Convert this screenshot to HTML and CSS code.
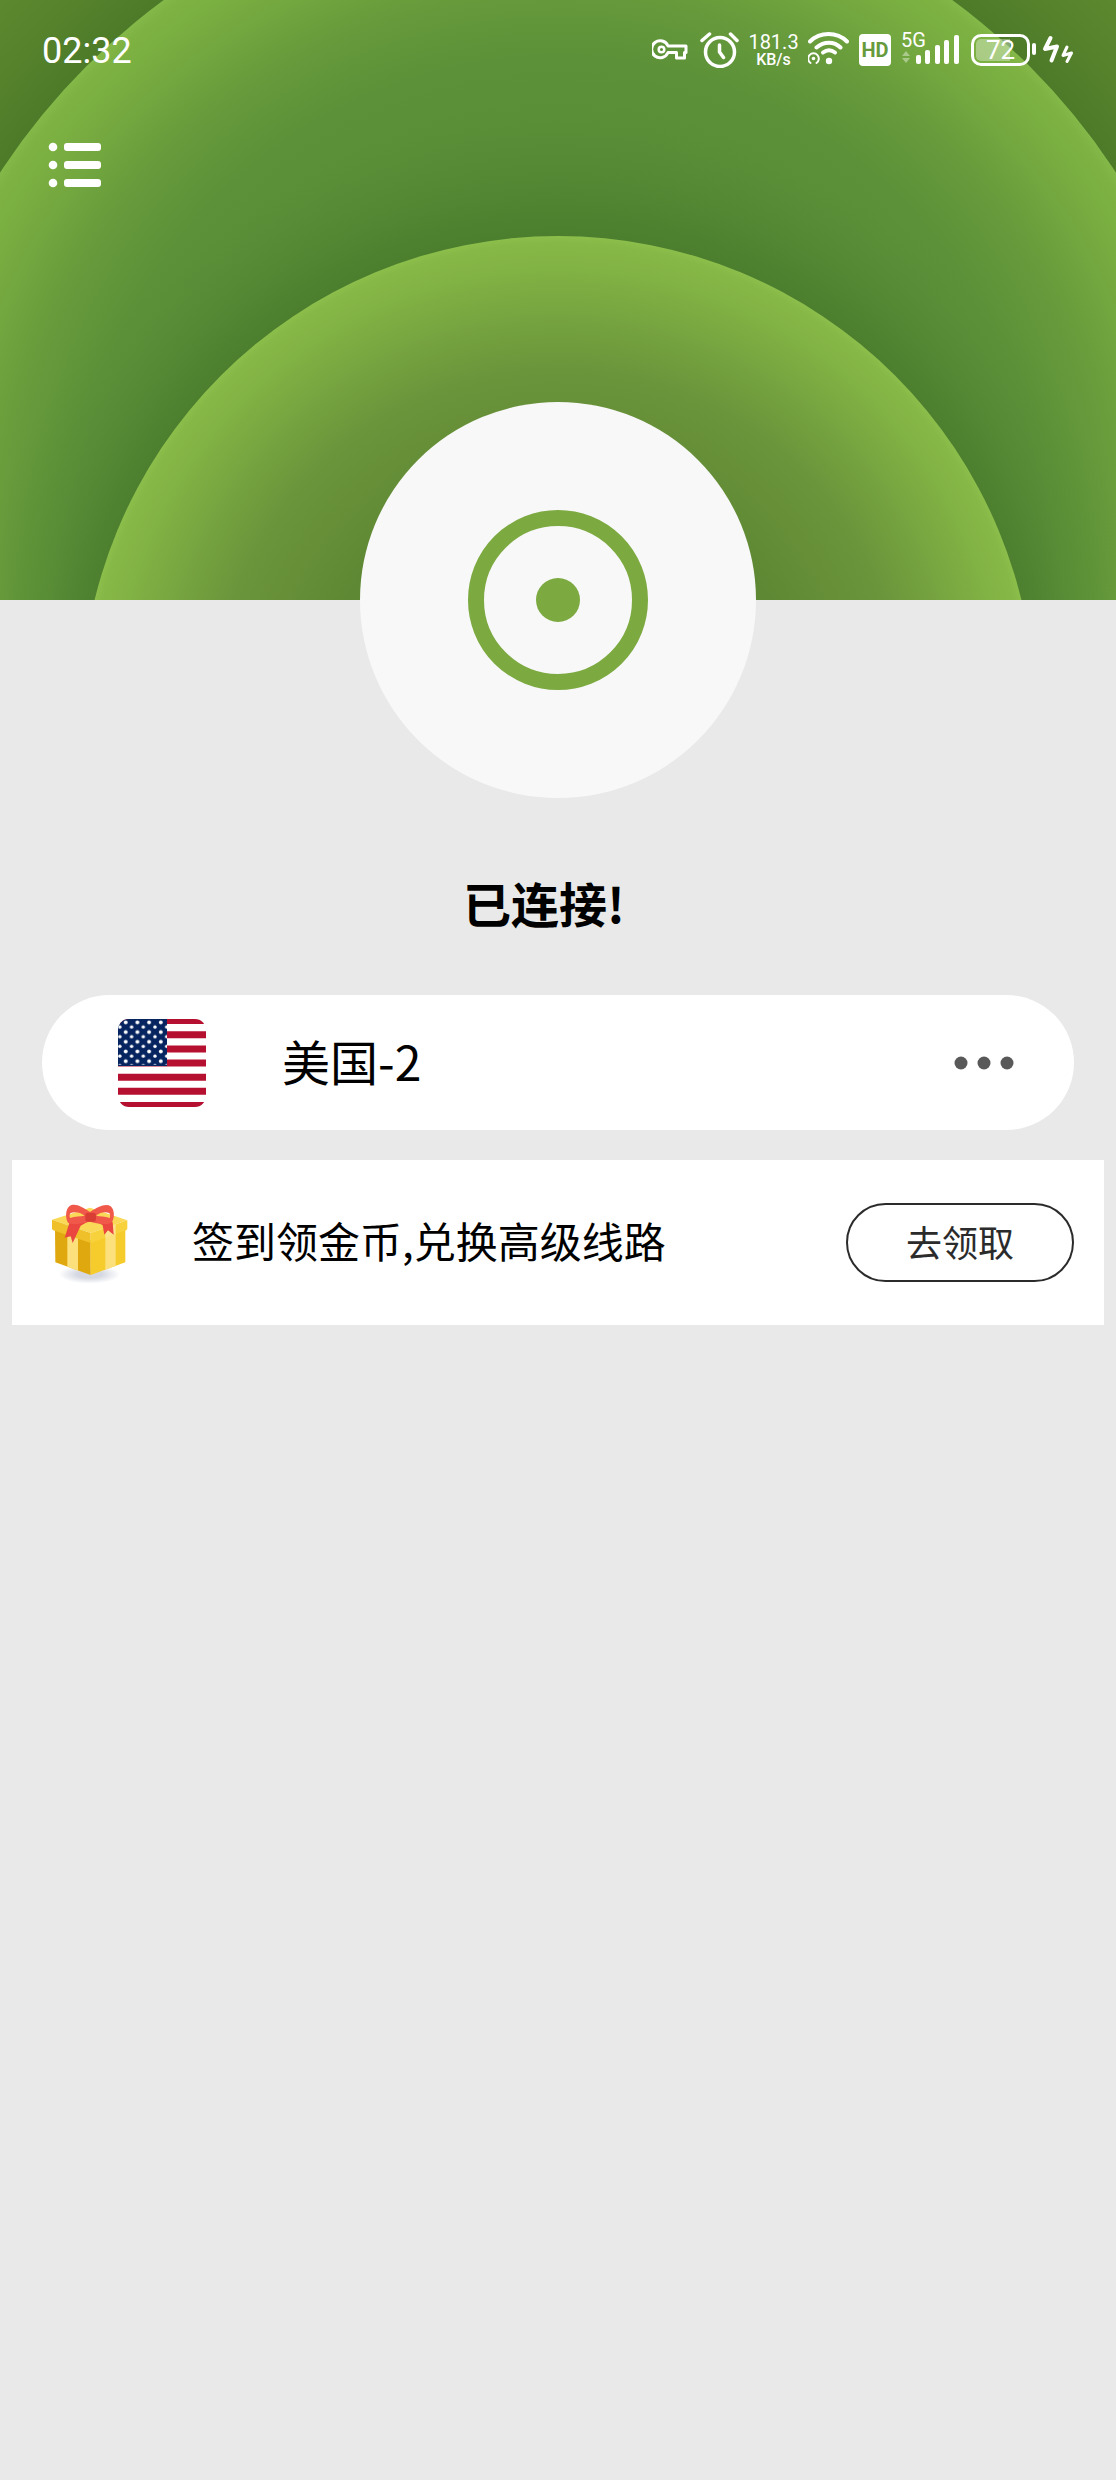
FILE: index.html
```html
<!DOCTYPE html>
<html lang="zh-CN">
<head>
<meta charset="utf-8">
<meta name="viewport" content="width=device-width, initial-scale=1">
<title>已连接</title>
<link rel="stylesheet" href="styles.css">
</head>
<body>
<header class="hero">
  <svg class="hero-art" viewBox="0 0 1116 600" preserveAspectRatio="xMidYMax slice" aria-hidden="true">
    <defs>
      <radialGradient id="back" gradientUnits="userSpaceOnUse" cx="558" cy="538" r="800">
        <stop offset="0.83" stop-color="#4c7a28"/>
        <stop offset="0.9" stop-color="#56822c"/>
        <stop offset="1" stop-color="#5f8b31"/>
      </radialGradient>
      <radialGradient id="outer" gradientUnits="userSpaceOnUse" cx="558" cy="538" r="667">
        <stop offset="0.5" stop-color="#568a34"/>
        <stop offset="0.72" stop-color="#5d9139"/>
        <stop offset="0.82" stop-color="#669a3b"/>
        <stop offset="0.92" stop-color="#76aa40"/>
        <stop offset="0.985" stop-color="#7eb343"/>
        <stop offset="1" stop-color="#84b94a"/>
      </radialGradient>
      <radialGradient id="shade" gradientUnits="userSpaceOnUse" cx="558" cy="713" r="600">
        <stop offset="0.79" stop-color="#47792b" stop-opacity="0.75"/>
        <stop offset="0.87" stop-color="#4c7f2e" stop-opacity="0.4"/>
        <stop offset="1" stop-color="#568a34" stop-opacity="0"/>
      </radialGradient>
      <radialGradient id="inner" gradientUnits="userSpaceOnUse" cx="558" cy="713" r="477">
        <stop offset="0.5" stop-color="#5f8834"/>
        <stop offset="0.72" stop-color="#6b953b"/>
        <stop offset="0.84" stop-color="#77a540"/>
        <stop offset="0.93" stop-color="#81b244"/>
        <stop offset="0.985" stop-color="#86b847"/>
        <stop offset="1" stop-color="#8cbe4c"/>
      </radialGradient>
    </defs>
    <rect width="1116" height="600" fill="url(#back)"/>
    <circle cx="558" cy="538" r="667" fill="url(#outer)"/>
    <circle cx="558" cy="713" r="600" fill="url(#shade)"/>
    <circle cx="558" cy="713" r="477" fill="url(#inner)"/>
  </svg>

  <div class="status-bar">
    <time class="clock">02:32</time>
    <div class="status-icons">
      <svg width="38" height="36" viewBox="0 0 38 36" fill="none" stroke="#fff" stroke-width="3" stroke-linejoin="round">
        <path d="M16 14H34V20.500H32.500V26H24.500V20.500H16A8.500 8.500 0 1 1 16 14Z"/>
        <circle cx="9.500" cy="17.500" r="2.800" stroke-width="2.500"/>
      </svg>
      <svg width="39" height="36" viewBox="0 0 39 36" fill="none" stroke="#fff" stroke-width="3.500" stroke-linecap="round" stroke-linejoin="round">
        <circle cx="20" cy="20" r="14.500"/>
        <path d="M19.500 13v7l4 5.500M2 8.500L9.500 2M30.500 2L37 8.500"/>
      </svg>
      <div class="speed"><span class="speed-value">181.3</span><span class="speed-unit">KB/s</span></div>
      <svg width="41" height="36" viewBox="0 0 41 36" fill="none" stroke="#fff" stroke-linecap="round">
        <path stroke-width="4" d="M2 9.500C12-.5 29-.5 39 9.500M8.500 15.500C16 9 26 9 32.500 15.500"/>
        <path stroke-width="4" d="M15 20.500C19 17.500 23 17.500 27 20.500"/>
        <circle cx="21" cy="29" r="3.200" fill="#fff" stroke="none"/>
        <circle cx="5.500" cy="26.500" r="1.800" fill="#fff" stroke="none"/>
        <path stroke-width="2" d="M2.500 31A5.300 5.300 0 1 1 8.500 31"/>
      </svg>
      <span class="hd">HD</span>
      <div class="signal">
        <span class="network">5G</span>
        <svg width="60" height="36" viewBox="0 0 60 36" fill="#fff">
          <path fill-opacity=".4" d="M5 19l4 5H1zM5 31l4-5H1z"/>
          <rect x="15" y="23" width="5" height="9" rx="2"/>
          <rect x="24" y="18" width="5" height="14" rx="2"/>
          <rect x="34" y="13" width="5" height="19" rx="2"/>
          <rect x="43" y="8" width="5" height="24" rx="2"/>
          <rect x="53" y="3" width="5" height="29" rx="2"/>
        </svg>
      </div>
      <div class="power">
        <span class="battery">72</span>
        <svg width="4" height="36" viewBox="0 0 4 36"><rect y="11" width="4" height="12" rx="2" fill="#fff"/></svg>
        <svg class="bolt" width="32" height="36" viewBox="0 0 32 36" fill="none" stroke="#fff" stroke-linecap="round" stroke-linejoin="round">
          <path stroke-width="4" d="M8.500 6L3 17L15 14.500L9.500 28.500"/>
          <path stroke-width="3" d="M25 15L21 23.500L29.500 21L25 29.500"/>
        </svg>
      </div>
    </div>
  </div>

  <button class="menu" type="button" aria-label="菜单">
    <svg width="54" height="50" viewBox="0 0 54 50" fill="#fff">
      <circle cx="5" cy="7" r="4.300"/><circle cx="5" cy="25" r="4.300"/><circle cx="5" cy="43" r="4.300"/>
      <rect x="16" y="3" width="37" height="8" rx="3"/><rect x="16" y="21" width="37" height="8" rx="3"/><rect x="16" y="39" width="37" height="8" rx="3"/>
    </svg>
  </button>
</header>

<main class="content">
  <button class="connect" type="button" aria-label="断开连接"><span class="connect-ring"></span></button>
  <h1 class="state">已连接!</h1>

  <button class="server" type="button">
    <svg class="flag" width="88" height="88" viewBox="0 0 88 88">
      <defs>
        <clipPath id="flag-shape"><rect width="88" height="88" rx="11"/></clipPath>
        <pattern id="stars" width="11.700" height="9.700" patternUnits="userSpaceOnUse">
          <circle cx="7.700" cy="3.400" r="1.900" fill="#fff"/><circle cx="1.900" cy="8" r="1.700" fill="#fff"/>
        </pattern>
      </defs>
      <g clip-path="url(#flag-shape)">
        <rect width="88" height="88" fill="#fff"/>
        <path stroke="#b5102f" stroke-width="7" d="M0 1.500H88M0 15.700H88M0 29.900H88M0 44H88M0 58.200H88M0 72.300H88M0 86.500H88"/>
        <rect width="49" height="47" fill="#06245f"/>
        <rect width="49" height="46" fill="url(#stars)"/>
      </g>
    </svg>
    <span class="server-name">美国-2</span>
    <svg width="60" height="14" viewBox="0 0 60 14" fill="#595959"><circle cx="7" cy="7" r="6.500"/><circle cx="30" cy="7" r="6.500"/><circle cx="53" cy="7" r="6.500"/></svg>
  </button>

  <section class="reward">
    <svg class="gift" width="76" height="82" viewBox="36 35 228 246" aria-hidden="true">
      <defs>
        <radialGradient id="gift-shadow"><stop offset=".4" stop-color="#d5d8e2"/><stop offset="1" stop-color="#d5d8e2" stop-opacity="0"/></radialGradient>
      </defs>
      <ellipse cx="148" cy="252" rx="92" ry="28" fill="url(#gift-shadow)"/>
      <path fill="#e0a80f" d="M45 118L152 150V254L46 216Z"/>
      <path fill="#f6cc2c" d="M152 150L256 116V216L152 254Z"/>
      <path fill="#fbe07c" d="M82 130L114 142V241L82 229Z"/>
      <path fill="#fbe07c" d="M196 135L227 125V227L196 238Z"/>
      <path fill="#f9d957" d="M36 88L150 52L262 90L152 128Z"/>
      <path fill="#f0c02a" d="M36 88L152 128V158L40 120Q36 118 36 114Z"/>
      <path fill="#f8d23c" d="M262 90L152 128V158L258 120Q262 118 262 114Z"/>
      <path fill="#fbe48c" d="M196 113L227 102V131L196 143Z"/>
      <path fill="#e9473f" d="M88 98L74 142L92 138L98 158L122 106L143 94L118 80Z"/>
      <path fill="#e9473f" d="M160 88L188 105L193 133L204 120L221 133L218 96L200 84Z"/>
      <path fill="#f0584a" fill-rule="evenodd" d="M150 65C126 50 104 36 88 48C76 58 76 84 84 97C100 106 126 98 150 94C176 100 202 106 216 96C224 82 224 58 212 48C196 38 174 50 150 65ZM92 68C106 62 126 68 134 76C120 79 106 77 90 83C88 77 88 72 92 68ZM208 68C211 73 211 78 209 83C194 77 180 79 168 76C176 68 194 62 208 68Z"/>
      <rect x="136" y="67" width="32" height="27" rx="8" fill="#d93e35"/>
    </svg>
    <p class="reward-text">签到领金币,兑换高级线路</p>
    <button class="claim" type="button">去领取</button>
  </section>
</main>
</body>
</html>
```
FILE: styles.css
```css
* {
  box-sizing: border-box;
}

body {
  margin: 0;
  min-height: 100vh;
  background: #e9e9e9;
  color: #000;
  font-family: "Noto Sans CJK SC", sans-serif;
}

button {
  margin: 0;
  padding: 0;
  border: 0;
  background: none;
  color: inherit;
  font: inherit;
  cursor: pointer;
}

svg {
  display: block;
  flex: none;
}

/* Green header */
.hero {
  position: relative;
  height: 600px;
  padding: 32px 42px 0;
  overflow: hidden;
  color: #fff;
}

.hero-art {
  position: absolute;
  inset: 0;
  z-index: -1;
  width: 100%;
  height: 100%;
}

.status-bar {
  display: flex;
  align-items: center;
  justify-content: space-between;
  height: 36px;
  font-family: Roboto, sans-serif;
}

.clock {
  padding-top: 2px;
  font-size: 36px;
  line-height: 36px;
}

.status-icons {
  display: flex;
  align-items: center;
  gap: 10px;
}

.speed {
  display: flex;
  flex-direction: column;
  align-items: center;
  width: 49px;
}

.speed-value {
  font-size: 20px;
  line-height: 20px;
}

.speed-unit {
  font-size: 16px;
  font-weight: 500;
  line-height: 16px;
}

.hd {
  width: 32px;
  height: 32px;
  border-radius: 4px;
  background: #fff;
  color: #679a3c;
  font-size: 20px;
  font-weight: 700;
  line-height: 32px;
  text-align: center;
}

.signal {
  position: relative;
}

.network {
  position: absolute;
  top: -2px;
  left: 0;
  font-size: 20px;
  line-height: 20px;
}

.power {
  display: flex;
  align-items: center;
  gap: 2px;
}

.battery {
  width: 59px;
  height: 32px;
  padding: 2px;
  border: 3px solid #fff;
  border-radius: 10px;
  background: linear-gradient(to right, rgba(255, 255, 255, 0.35) 70%, transparent 70%) content-box;
  font-size: 26px;
  line-height: 23px;
  text-align: center;
}

.bolt {
  margin-left: 4px;
}

.menu {
  display: block;
  margin: 72px 6px 0;
}

/* Connection state */
.content {
  display: flex;
  flex-direction: column;
  align-items: center;
}

.connect {
  position: relative;
  display: grid;
  place-items: center;
  width: 396px;
  height: 396px;
  margin-top: -198px;
  border-radius: 50%;
  background: #f8f8f8;
}

.connect-ring {
  display: grid;
  place-items: center;
  width: 180px;
  height: 180px;
  border: 16px solid #7caa41;
  border-radius: 50%;
}

.connect-ring::before {
  content: "";
  width: 44px;
  height: 44px;
  border-radius: 50%;
  background: #7caa41;
}

.state {
  margin: 74px 0 63px;
  padding-right: 28px;
  font-size: 48px;
  font-weight: 700;
  line-height: 60px;
}

/* Server picker */
.server {
  display: flex;
  align-items: center;
  gap: 76px;
  width: calc(100% - 84px);
  height: 135px;
  padding: 0 60px 0 76px;
  border-radius: 68px;
  background: #fff;
}

.server-name {
  flex: 1;
  padding-bottom: 6px;
  font-size: 48px;
  line-height: 60px;
  text-align: left;
}

/* Daily reward */
.reward {
  display: flex;
  align-items: center;
  gap: 64px;
  width: calc(100% - 24px);
  height: 165px;
  margin-top: 30px;
  padding: 0 30px 0 40px;
  background: #fff;
}

.reward-text {
  flex: 1;
  margin: 0;
  padding-bottom: 6px;
  font-size: 42px;
  line-height: 60px;
}

.claim {
  width: 228px;
  height: 79px;
  padding-bottom: 4px;
  border: 2px solid #2b2b2b;
  border-radius: 40px;
  color: #2b2b2b;
  font-size: 36px;
}
```
